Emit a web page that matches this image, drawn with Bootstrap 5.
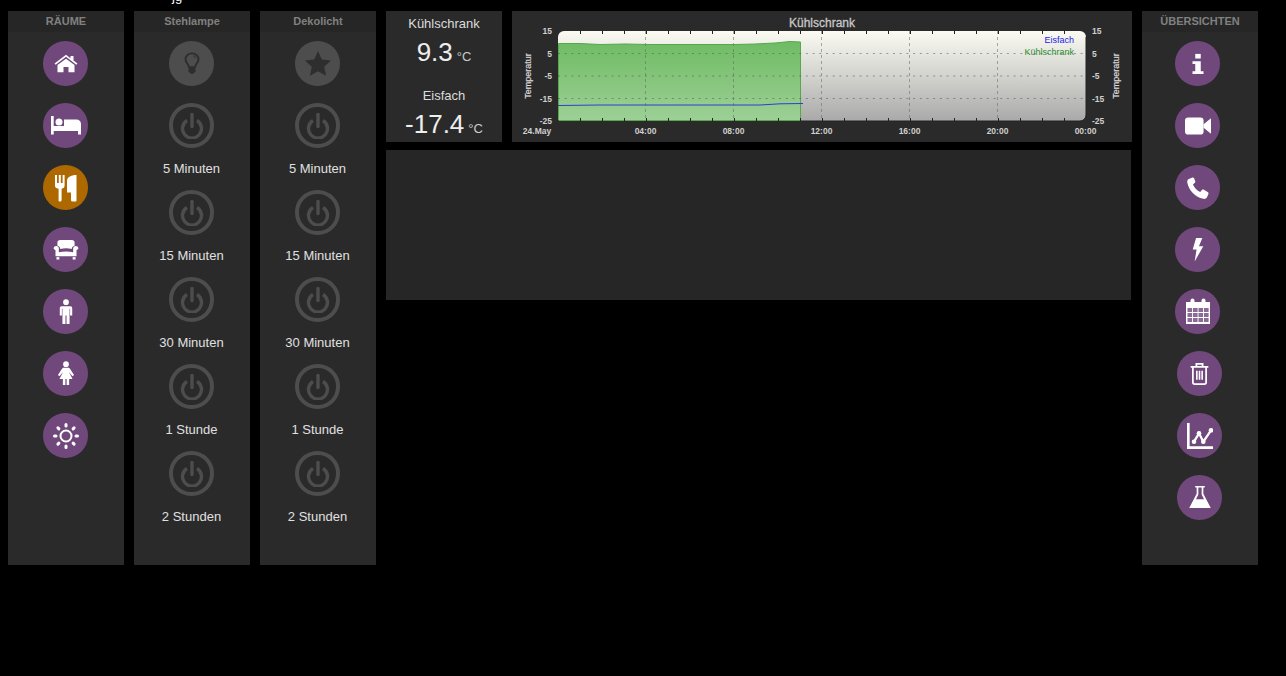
<!DOCTYPE html>
<html lang="de">
<head>
<meta charset="UTF-8">
<title>Haus</title>
<link href="https://cdn.jsdelivr.net/npm/bootstrap@5.3.0/dist/css/bootstrap.min.css" rel="stylesheet">
<style>
body { background: #000; font-family: "Liberation Sans", Arial, sans-serif; color: #e8e8e8; }
.page-wrap { padding: 11px 28px 0 8px; gap: 10px; position: relative; }
.cut-text { position: absolute; left: 172px; top: -10px; font-size: 13px; line-height: 13px; color: #fff; }
.panel-col { width: 116px; height: 554px; background: #2a2a2a; flex: none; }
.panel-head { height: 21px; line-height: 21px; background: #262626; font-size: 11px; font-weight: 700; color: #808080; text-align: center; }
.panel-items { padding: 9.25px 1px 0 0; }
.round-btn { width: 44.5px; height: 44.5px; border-radius: 50%; background: #70487c; display: flex; align-items: center; justify-content: center; margin: 0 auto 17.5px; }
.round-btn svg { display: block; flex: none; }
.round-btn.active-room { background: #ad6800; }
.round-btn.lamp { background: #4d4d4d; }
.round-btn.off { background: none; border: 4px solid #4d4d4d; margin-bottom: 0; }
.overview-items .round-btn { margin-left: 33.25px; }
.overview-items .round-btn.inset-btn { margin-left: 35.25px; }
.time-label { font-size: 13px; line-height: 15px; text-align: center; color: #e0e0e0; margin: 13.5px 0 14px; }
.middle-col { width: 746px; flex: none; gap: 8px; }
.top-row { gap: 10px; height: 131px; }
.temp-box { width: 116px; background: #2a2a2a; text-align: center; padding-top: 5px; flex: none; }
.temp-name { font-size: 13px; line-height: 15px; color: #dcdcdc; }
.temp-value { font-size: 26px; line-height: 30px; color: #eee; margin: 6px 0 16px; }
.temp-value small { font-size: 13px; color: #ccc; font-weight: 400; margin-left: 4px; }
.temp-box .temp-value:last-child { margin-bottom: 0; }
.chart-box { width: 620px; height: 131px; background: #2a2a2a; flex: none; }
.chart-box svg { display: block; }
.chart-box text { font-family: "Liberation Sans", Arial, sans-serif; }
.empty-box { width: 745px; height: 150px; background: #262626; }
</style>
</head>
<body>
<svg width="0" height="0" class="position-absolute">
  <symbol id="power" viewBox="0 0 24 26"><g fill="none" stroke="#4d4d4d" stroke-width="3.400"><path d="M7 7.500a9.500 9.500 0 1 0 10 0"/><path d="M12 1.500v12" stroke-linecap="round"/></g></symbol>
</svg>
<div class="page-wrap d-flex align-items-start">
  <span class="cut-text">jg</span>

  <!-- rooms -->
  <div class="panel-col">
    <div class="panel-head">RÄUME</div>
    <div class="panel-items">
      <div class="round-btn"><svg width="26" height="23" viewBox="0 0 26 26" preserveAspectRatio="none" fill="#fff"><path d="M13 3 1.500 13l1.200 1.300L13 5.400l10.300 8.900 1.200-1.300-4-3.500V4.500h-3v2.700z"/><path d="M13 7.500 4.500 14.800V23h6v-6h5v6h6v-8.200z"/></svg></div>
      <div class="round-btn"><svg width="30" height="19" viewBox="0 0 30 19" fill="#fff"><rect x="0" y="0" width="2.700" height="18.500"/><rect x="2" y="10" width="28" height="5"/><rect x="27" y="14" width="3" height="4.500"/><circle cx="8" cy="6" r="3.500"/><path d="M13 3.500h12.500A4.500 4.500 0 0 1 30 8v3H13z"/></svg></div>
      <div class="round-btn active-room"><svg width="26" height="30" viewBox="0 0 26 30" fill="#fff"><path d="M2 2h2v8h1.800V2h2v8h1.800V2h2v10.500c0 1.800-1 2.800-3 3.300V27a1.500 1.500 0 0 1-1.500 1.500h-1A1.500 1.500 0 0 1 5.600 27V15.800C3 15.300 2 14.300 2 12.500z"/><path d="M23.500 2v25.500a1 1 0 0 1-1 1h-3a1.500 1.500 0 0 1-1.500-1.500v-7.500h-4V8c0-3.500 3.500-6 9.500-6z"/></svg></div>
      <div class="round-btn"><svg width="28" height="21" viewBox="0 0 28 22" fill="#fff"><path d="M5 4c0-2 1-3 3-3h12c2 0 3 1 3 3v3c-2 .5-3 2-3 3.500C16 9.500 12 9.500 8 10.500 8 9 7 7.500 5 7z"/><path d="M1 9.500a2.800 2.800 0 0 1 5.500 0V14c5-1.200 10-1.200 15 0V9.500a2.800 2.800 0 0 1 5.500 0c0 1-1 2-2 2.300V18H3v-6.200C2 11.500 1 10.500 1 9.500z"/><rect x="4" y="19" width="3" height="2.500"/><rect x="21" y="19" width="3" height="2.500"/></svg></div>
      <div class="round-btn"><svg width="16" height="25" viewBox="0 0 18 28" fill="#fff"><circle cx="9" cy="3.500" r="3.200"/><path d="M4 8h10a2 2 0 0 1 2 2v8.500h-2.400V11h-.6v17H9.600v-9.500H8.400V28H5V11h-.6v7.500H2V10a2 2 0 0 1 2-2z"/></svg></div>
      <div class="round-btn"><svg width="18" height="25" viewBox="0 0 20 28" fill="#fff"><circle cx="10" cy="3.500" r="3.200"/><path d="M7.500 7.500h5c1 0 1.500.5 2 1.300l4.500 7-1.700 1.400-4-5 4 8H13.500V27h-2.800v-6.800h-1.400V27H6.500v-6.800H2.700l4-8-4 5L1 15.800l4.500-7c.5-.8 1-1.300 2-1.300z"/></svg></div>
      <div class="round-btn"><svg width="28" height="28" viewBox="0 0 28 28" fill="#fff"><circle cx="14" cy="14" r="5.500" fill="none" stroke="#fff" stroke-width="2"/><g stroke="#fff" stroke-width="3" stroke-linecap="round"><path d="M14 2.500v1.500M14 24v1.500M2.500 14H4M24 14h1.500M5.900 5.900l1 1M21.100 21.100l1 1M22.100 5.900l-1 1M6.900 21.100l-1 1"/></g></svg></div>
    </div>
  </div>

  <!-- Stehlampe -->
  <div class="panel-col">
    <div class="panel-head">Stehlampe</div>
    <div class="panel-items">
      <div class="round-btn lamp"><svg width="16" height="23" viewBox="0 0 16 26" preserveAspectRatio="none" fill="none" stroke="#2e2e2e" stroke-width="2"><path d="M5 17c0-3-3.500-4.500-3.500-9a6.500 6.500 0 0 1 13 0c0 4.500-3.500 6-3.500 9z"/><path d="M4.500 18h7v4l-2 2.500h-3l-2-2.500z" fill="#2e2e2e" stroke="none"/><path d="M9 4a3.500 3.500 0 0 1 2.500 3" stroke-width="1"/></svg></div>
      <div class="round-btn off"><svg width="24" height="26"><use href="#power"/></svg></div>
      <div class="time-label">5 Minuten</div>
      <div class="round-btn off"><svg width="24" height="26"><use href="#power"/></svg></div>
      <div class="time-label">15 Minuten</div>
      <div class="round-btn off"><svg width="24" height="26"><use href="#power"/></svg></div>
      <div class="time-label">30 Minuten</div>
      <div class="round-btn off"><svg width="24" height="26"><use href="#power"/></svg></div>
      <div class="time-label">1 Stunde</div>
      <div class="round-btn off"><svg width="24" height="26"><use href="#power"/></svg></div>
      <div class="time-label">2 Stunden</div>
    </div>
  </div>

  <!-- Dekolicht -->
  <div class="panel-col">
    <div class="panel-head">Dekolicht</div>
    <div class="panel-items">
      <div class="round-btn lamp"><svg width="26" height="25" viewBox="0 0 26 25" fill="#2e2e2e"><path d="M13 0l3.800 8.500 9.200 1-6.800 6.200 1.900 9.100L13 20.200l-8.100 4.600 1.900-9.100L0 9.500l9.200-1z"/></svg></div>
      <div class="round-btn off"><svg width="24" height="26"><use href="#power"/></svg></div>
      <div class="time-label">5 Minuten</div>
      <div class="round-btn off"><svg width="24" height="26"><use href="#power"/></svg></div>
      <div class="time-label">15 Minuten</div>
      <div class="round-btn off"><svg width="24" height="26"><use href="#power"/></svg></div>
      <div class="time-label">30 Minuten</div>
      <div class="round-btn off"><svg width="24" height="26"><use href="#power"/></svg></div>
      <div class="time-label">1 Stunde</div>
      <div class="round-btn off"><svg width="24" height="26"><use href="#power"/></svg></div>
      <div class="time-label">2 Stunden</div>
    </div>
  </div>

  <!-- middle -->
  <div class="middle-col d-flex flex-column">
    <div class="top-row d-flex">
      <div class="temp-box">
        <div class="temp-name">Kühlschrank</div>
        <div class="temp-value">9.3<small>°C</small></div>
        <div class="temp-name">Eisfach</div>
        <div class="temp-value">-17.4<small>°C</small></div>
      </div>
      <div class="chart-box">
        <svg id="chart" width="620" height="131" viewBox="512 11 620 131"></svg>
      </div>
    </div>
    <div class="empty-box"></div>
  </div>

  <!-- overviews -->
  <div class="panel-col">
    <div class="panel-head">ÜBERSICHTEN</div>
    <div class="panel-items overview-items">
      <div class="round-btn"><svg width="14" height="22" viewBox="0 0 14 24" fill="#fff"><rect x="4" y="1" width="6" height="5"/><path d="M1 9h9v11h3v3H1v-3h3v-8H1z"/></svg></div>
      <div class="round-btn"><svg width="26" height="18" viewBox="0 0 28 20" preserveAspectRatio="none" fill="#fff"><rect x="0" y="0.500" width="20" height="19" rx="3.500"/><path d="M20 8l8-6.500v17L20 12z"/></svg></div>
      <div class="round-btn"><svg width="24" height="24" viewBox="0 0 24 24" fill="#fff"><path d="M6.500 1.500 2.800 3C1.500 3.600 1 5 1.300 6.500c1.500 8 8 14.800 16 16.300 1.500.3 3-.2 3.700-1.500l1.500-3.500c.2-.6 0-1.200-.5-1.500l-4.500-2.700c-.6-.3-1.200-.2-1.600.3l-1.700 2c-3.200-1.500-5.800-4.300-7.300-7.500l2-1.600c.5-.4.600-1 .3-1.600L8 2c-.3-.5-1-.7-1.500-.5z"/></svg></div>
      <div class="round-btn"><svg width="14" height="25" viewBox="0 0 14 26" fill="#fff"><path d="M5 1h6.500L8 9.500h4.500L3.500 25.500 5.500 13H1.500z"/></svg></div>
      <div class="round-btn"><svg width="26" height="27" viewBox="0 0 26 27" fill="#fff"><path d="M1 4h4.500V2.500a2 2 0 0 1 4 0V4h7V2.500a2 2 0 0 1 4 0V4H25v22H1z"/><g fill="#8c6b96"><rect x="2.500" y="10" width="4.600" height="4"/><rect x="8" y="10" width="4.600" height="4"/><rect x="13.500" y="10" width="4.600" height="4"/><rect x="19" y="10" width="4.600" height="4"/><rect x="2.500" y="15" width="4.600" height="4"/><rect x="8" y="15" width="4.600" height="4"/><rect x="13.500" y="15" width="4.600" height="4"/><rect x="19" y="15" width="4.600" height="4"/><rect x="2.500" y="20" width="4.600" height="4"/><rect x="8" y="20" width="4.600" height="4"/><rect x="13.500" y="20" width="4.600" height="4"/><rect x="19" y="20" width="4.600" height="4"/></g></svg></div>
      <div class="round-btn inset-btn"><svg width="21" height="23" viewBox="0 0 22 26" fill="none" stroke="#fff" stroke-width="2"><path d="M1 5.500h20M7.500 5V2h7v3M3.500 6v17a2 2 0 0 0 2 2h11a2 2 0 0 0 2-2V6"/><path d="M8 10v10M11 10v10M14 10v10" stroke-width="1.800"/></svg></div>
      <div class="round-btn inset-btn"><svg width="26" height="26" viewBox="0 0 26 26" fill="none" stroke="#fff"><path d="M1.300 0v24.700H26" stroke-width="2.700"/><path d="M7 18.700 12 10.300l4.300 8.400L24 7.300" stroke-width="2.300"/><g fill="#fff" stroke="none"><circle cx="7" cy="18.700" r="2.300"/><circle cx="12" cy="10.300" r="2.300"/><circle cx="16.300" cy="18.700" r="2.300"/><circle cx="24" cy="7.300" r="2.300"/></g></svg></div>
      <div class="round-btn inset-btn"><svg width="22" height="23" viewBox="0 0 22 24" fill="#fff"><path d="M6 0h10v1.500h-1.500v6.500L22 22.500V23H0v-.5L7.500 8V1.500H6z"/><path d="M9.300 1.500h3.400v7.300l2.500 5H6.800l2.500-5z" fill="#70487c"/></svg></div>
    </div>
  </div>
</div>

<script>
// draw the Kühlschrank chart, coordinates are page pixels
var svg = '';
svg += '<defs><linearGradient id="plotBg" x1="0" y1="0" x2="0" y2="1"><stop offset="0" stop-color="#fbfbf3"/><stop offset="1" stop-color="#a9a9a9"/></linearGradient>' +
  '<linearGradient id="greenFill" x1="0" y1="0" x2="0" y2="1"><stop offset="0" stop-color="#6fbb64"/><stop offset="1" stop-color="#9dd096"/></linearGradient>' +
  '<clipPath id="plotClip"><path d="M564 31H1080a6 6 0 0 1 6 6V115a6 6 0 0 1-6 6H561a3 3 0 0 1-3-3V37a6 6 0 0 1 6-6z"/></clipPath></defs>';
svg += '<text x="822" y="27" text-anchor="middle" font-size="12" fill="#c8c8c8" stroke="#c8c8c8" stroke-width=".3">Kühlschrank</text>';
svg += '<g clip-path="url(#plotClip)">';
svg += '<rect x="558" y="31" width="528" height="90" fill="url(#plotBg)"/>';
// green area
var top_ = 'M558.500 43.500 L580 43.500 L600 44.500 L625 44 L650 44.500 L700 44.500 L735 44.500 L755 44 L775 43 L790 41.500 L800.500 42';
svg += '<path d="' + top_ + ' L800.500 120.500 L558.500 120.500 Z" fill="url(#greenFill)" stroke="#55a84c" stroke-width="1"/>';
// grid
[53.5, 76, 98.5].forEach(function (y) {
  svg += '<line x1="558" x2="1086" y1="' + y + '" y2="' + y + '" stroke="#555" stroke-opacity=".55" stroke-width="1" stroke-dasharray="2 4.700"/>';
});
[645.5, 733.5, 821.5, 909.5, 997.5].forEach(function (x) {
  svg += '<line x1="' + x + '" x2="' + x + '" y1="31" y2="121" stroke="#666" stroke-opacity=".55" stroke-width="1" stroke-dasharray="3 3"/>';
});
// hour ticks
for (var i = 1; i < 24; i++) {
  var x = Math.round(557.5 + i * 22) + 0.5;
  svg += '<line x1="' + x + '" x2="' + x + '" y1="31" y2="34" stroke="#222"/><line x1="' + x + '" x2="' + x + '" y1="118" y2="121" stroke="#222"/>';
}
svg += '</g>';
// right and bottom edge
svg += '<path d="M1086 37V115a6 6 0 0 1-6 6H801" fill="none" stroke="#222" stroke-width="1"/>';
svg += '<path d="M558 105.500 L600 105 L760 105 L780 103.800 L803 103.500" fill="none" stroke="#2a3fd8" stroke-width="1"/>';
// y axes
[['15', 31], ['5', 53.5], ['-5', 76], ['-15', 98.5], ['-25', 121]].forEach(function (t) {
  svg += '<text x="552" y="' + (t[1] + 3) + '" text-anchor="end" font-size="8.500" font-weight="700" fill="#d0d0d0">' + t[0] + '</text>';
  svg += '<text x="1092" y="' + (t[1] + 3) + '" font-size="8.500" font-weight="700" fill="#d0d0d0">' + t[0] + '</text>';
});
svg += '<text transform="translate(531,76) rotate(-90)" text-anchor="middle" font-size="9" fill="#d8d8d8" stroke="#d8d8d8" stroke-width=".2">Temperatur</text>';
svg += '<text transform="translate(1119,76) rotate(-90)" text-anchor="middle" font-size="9" fill="#d8d8d8" stroke="#d8d8d8" stroke-width=".2">Temperatur</text>';
// x axis
[['24.May', 537], ['04:00', 645.5], ['08:00', 733.5], ['12:00', 821.5], ['16:00', 909.5], ['20:00', 997.5], ['00:00', 1085.5]].forEach(function (t) {
  svg += '<text x="' + t[1] + '" y="134" text-anchor="middle" font-size="8.500" font-weight="700" fill="#d0d0d0">' + t[0] + '</text>';
});
// legend
svg += '<text x="1074" y="43" text-anchor="end" font-size="9" fill="#1a1ae6">Eisfach</text>';
svg += '<text x="1074" y="55" text-anchor="end" font-size="9" fill="#2c8c2c">Kühlschrank</text>';
document.getElementById('chart').innerHTML = svg;
</script>
<script src="https://cdn.jsdelivr.net/npm/bootstrap@5.3.0/dist/js/bootstrap.bundle.min.js"></script>
</body>
</html>
